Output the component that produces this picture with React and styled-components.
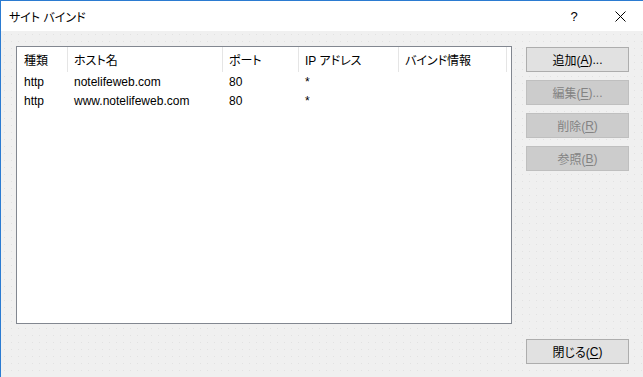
import React from "react";
import styled, { createGlobalStyle } from "styled-components";

const GlobalStyle = createGlobalStyle`
  html, body {
    margin: 0;
    padding: 0;
    background: #ffffff;
  }
  * {
    box-sizing: border-box;
  }
`;

const Window = styled.div`
  width: 643px;
  height: 377px;
  display: flex;
  flex-direction: column;
  border-top: 1px solid #2b7bd1;
  border-left: 1px solid #2b7bd1;
  font-family: "Liberation Sans", "Noto Sans CJK JP", sans-serif;
  font-size: 12px;
  font-feature-settings: "palt";
  color: #000;
  overflow: hidden;
`;

const TitleBar = styled.div`
  height: 30px;
  flex: none;
  display: flex;
  align-items: center;
  background: #ffffff;
  padding-left: 8px;
`;

const Title = styled.div`
  flex: 1;
  font-size: 12px;
`;

const TitleButton = styled.div`
  width: 46px;
  height: 30px;
  display: flex;
  align-items: center;
  justify-content: center;
  font-family: "Liberation Sans", sans-serif;
  font-size: 13px;
`;

const Body = styled.div`
  flex: 1;
  display: flex;
  gap: 14px;
  padding: 15px 14px 13px 15px;
  background-color: #f0f0f0;
  background-image: radial-gradient(#e2e2e2 0.6px, transparent 0.9px);
  background-size: 7px 7px;
`;

const ListBox = styled.div`
  width: 496px;
  height: 278px;
  background: #ffffff;
  border: 1px solid #828790;
`;

const Table = styled.div`
  display: grid;
  grid-template-columns: 51px 155px 76px 100px 108px 1fr;
`;

const HeadCell = styled.div`
  height: 25px;
  display: flex;
  align-items: center;
  padding-left: ${(p) => (p.$first ? "7px" : "6px")};
  border-right: 1px solid ${(p) => (p.$last ? "transparent" : "#e5e5e5")};
  white-space: nowrap;
`;

const Cell = styled.div`
  height: 19px;
  display: flex;
  align-items: center;
  padding-left: ${(p) => (p.$first ? "7px" : "6px")};
  white-space: nowrap;
`;

const Side = styled.div`
  width: 103px;
  padding-top: 1px;
  display: flex;
  flex-direction: column;
  justify-content: space-between;
`;

const ButtonStack = styled.div`
  display: flex;
  flex-direction: column;
  gap: 8px;
`;

const Button = styled.div`
  height: 25px;
  display: flex;
  align-items: center;
  justify-content: center;
  background: ${(p) => (p.$disabled ? "#cccccc" : "#e1e1e1")};
  border: 1px solid ${(p) => (p.$disabled ? "#bfbfbf" : "#adadad")};
  color: ${(p) => (p.$disabled ? "#838383" : "#000000")};
  white-space: nowrap;
  u {
    text-decoration: underline;
    text-underline-offset: 2px;
  }
`;

const columns = ["種類", "ホスト名", "ポート", "IP アドレス", "バインド情報", ""];

const rows = [
  ["http", "notelifeweb.com", "80", "*", "", ""],
  ["http", "www.notelifeweb.com", "80", "*", "", ""],
];

function CloseIcon() {
  return (
    <svg width="11" height="11" viewBox="0 0 11 11">
      <path d="M0.5 0.5 L10.5 10.5 M10.5 0.5 L0.5 10.5" stroke="#000" strokeWidth="1" />
    </svg>
  );
}

export default function App() {
  return (
    <>
      <GlobalStyle />
      <Window>
        <TitleBar>
          <Title>サイト バインド</Title>
          <TitleButton>?</TitleButton>
          <TitleButton>
            <CloseIcon />
          </TitleButton>
        </TitleBar>
        <Body>
          <ListBox>
            <Table>
              {columns.map((c, i) => (
                <HeadCell key={i} $first={i === 0} $last={i === columns.length - 1}>
                  {c}
                </HeadCell>
              ))}
              {rows.map((r, ri) =>
                r.map((v, ci) => (
                  <Cell key={ri + "-" + ci} $first={ci === 0}>
                    {v}
                  </Cell>
                ))
              )}
            </Table>
          </ListBox>
          <Side>
            <ButtonStack>
              <Button>
                追加(<u>A</u>)...
              </Button>
              <Button $disabled>
                編集(<u>E</u>)...
              </Button>
              <Button $disabled>
                削除(<u>R</u>)
              </Button>
              <Button $disabled>
                参照(<u>B</u>)
              </Button>
            </ButtonStack>
            <Button>
              閉じる(<u>C</u>)
            </Button>
          </Side>
        </Body>
      </Window>
    </>
  );
}
